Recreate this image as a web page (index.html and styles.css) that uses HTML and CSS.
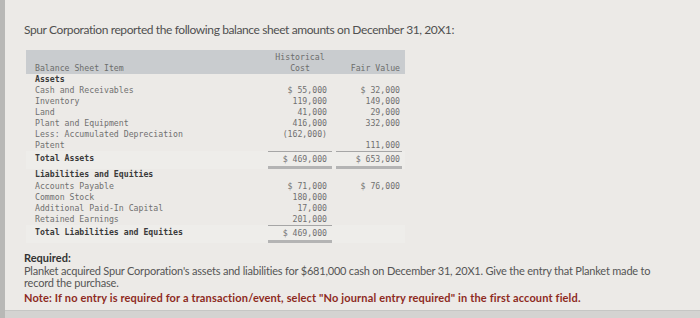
FILE: index.html
```html
<!DOCTYPE html>
<html>
<head>
<meta charset="utf-8">
<link rel="stylesheet" href="styles.css">
</head>
<body>
<div class="screen">
  <div class="content">
    <p class="title">Spur Corporation reported the following balance sheet amounts on December 31, 20X1:</p>
    <div class="sheet">
      <div class="row head">
        <div class="item">Balance Sheet Item</div>
        <div class="hist">Historical<br>Cost</div>
        <div class="fair">Fair Value</div>
      </div>
      <div class="row bold"><div class="item">Assets</div><div class="hist"></div><div class="fair"></div></div>
      <div class="row"><div class="item">Cash and Receivables</div><div class="hist">$ 55,000</div><div class="fair">$ 32,000</div></div>
      <div class="row"><div class="item">Inventory</div><div class="hist">119,000</div><div class="fair">149,000</div></div>
      <div class="row"><div class="item">Land</div><div class="hist">41,000</div><div class="fair">29,000</div></div>
      <div class="row"><div class="item">Plant and Equipment</div><div class="hist">416,000</div><div class="fair">332,000</div></div>
      <div class="row"><div class="item">Less: Accumulated Depreciation</div><div class="hist">(162,000)</div><div class="fair"></div></div>
      <div class="row"><div class="item">Patent</div><div class="hist"></div><div class="fair">111,000</div></div>
      <div class="row bold total">
        <div class="item">Total Assets</div>
        <div class="hist line">$ 469,000</div>
        <div class="fair line">$ 653,000</div>
      </div>
      <div class="row bold section"><div class="item">Liabilities and Equities</div><div class="hist"></div><div class="fair"></div></div>
      <div class="row"><div class="item">Accounts Payable</div><div class="hist">$ 71,000</div><div class="fair">$ 76,000</div></div>
      <div class="row"><div class="item">Common Stock</div><div class="hist">180,000</div><div class="fair"></div></div>
      <div class="row"><div class="item">Additional Paid-In Capital</div><div class="hist">17,000</div><div class="fair"></div></div>
      <div class="row"><div class="item">Retained Earnings</div><div class="hist">201,000</div><div class="fair"></div></div>
      <div class="row bold total">
        <div class="item">Total Liabilities and Equities</div>
        <div class="hist line">$ 469,000</div>
        <div class="fair"></div>
      </div>
    </div>
    <div class="required">
      <p class="req-label">Required:</p>
      <p class="req-text">Planket acquired Spur Corporation's assets and liabilities for $681,000 cash on December 31, 20X1. Give the entry that Planket made to record the purchase.</p>
      <p class="note">Note: If no entry is required for a transaction/event, select "No journal entry required" in the first account field.</p>
    </div>
  </div>
  <div class="bottom-band"></div>
</div>
</body>
</html>
```

FILE: styles.css
```css
html, body {
  margin: 0;
  padding: 0;
}
body {
  width: 700px;
  height: 318px;
  overflow: hidden;
  background: #eceae7;
  font-family: Lato, "Open Sans", sans-serif;
}
.screen {
  height: 318px;
  display: flex;
  flex-direction: column;
  border-left: 5px solid #b8b8b6;
  box-sizing: border-box;
}
.content {
  flex: 1;
  padding: 0 0 0 19px;
}
.title {
  margin: 23px 0 0 0;
  font-size: 12px;
  line-height: 14px;
  color: #505050;
  letter-spacing: -0.4px;
}
.sheet {
  margin: 13px 0 0 2px;
  width: 379px;
  font-family: "DejaVu Sans Mono", "Liberation Mono", monospace;
  font-size: 8.2px;
  color: #707070;
}
.row {
  display: grid;
  grid-template-columns: 242px 64px 4px 66px 3px;
  grid-template-areas: "item hist . fair .";
  line-height: 11px;
}
.item { grid-area: item; padding-left: 9px; }
.hist { grid-area: hist; text-align: right; padding-right: 5px; }
.fair { grid-area: fair; text-align: right; padding-right: 2px; }
.head {
  background: #c9cccf;
  height: 24px;
  align-items: end;
  color: #6c6c6c;
  padding-bottom: 0;
  box-sizing: border-box;
}
.head .hist { text-align: center; padding-right: 0; line-height: 11px; }
.head .fair { text-align: right; }
.bold .item {
  font-weight: bold;
  color: #3a3a3a;
}
.total {
  line-height: 14px;
  background: rgba(255,255,255,0.15);
}
.total .line {
  border-top: 1px solid #a6a6a6;
  border-bottom: 3px solid #b4b4b4;
}
.section { margin-top: 0; }
.section + .row { margin-top: 1px; }
.required {
  margin-top: 8px;
  margin-left: 0;
}
.required p { margin: 0; }
.req-label {
  font-weight: bold;
  font-size: 11px;
  line-height: 14px;
  color: #333;
}
.req-text {
  font-size: 11px;
  line-height: 12px;
  color: #555;
  width: 655px;
  letter-spacing: -0.2px;
}
.note {
  margin-top: 2px !important;
  font-weight: bold;
  font-size: 11px;
  line-height: 13px;
  color: #8e2a1e;
  letter-spacing: 0.15px;
}
.bottom-band {
  height: 7px;
  background: #d4d3d1;
  border-top: 1px solid #c6c6c4;
}
```
